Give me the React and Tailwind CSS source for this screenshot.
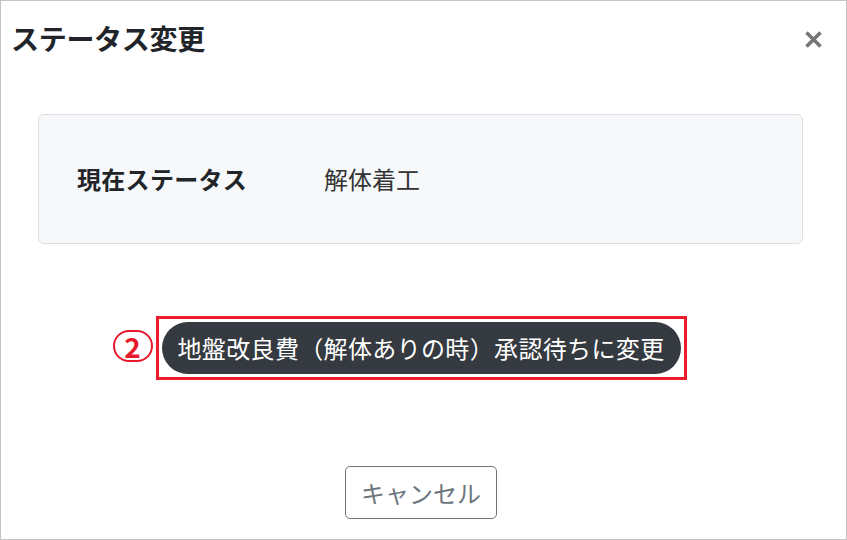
export default function App() {
    return (
        <div className="w-[847px] h-[540px] bg-white border border-[#c4c4c4] text-[#212529] overflow-hidden" style={{ fontFamily: '"Noto Sans CJK JP", "Noto Sans", sans-serif' }}>
            <div className="w-[840px]">
                {/* header */}
                <div className="flex items-start justify-between pl-[10px] pr-[18px] pt-[17px]">
                    <h1 className="text-[28px] font-bold leading-[40px] tracking-[-0.3px]">ステータス変更</h1>
                    <button className="mt-[12px]" aria-label="close">
                        <svg width="19" height="19" viewBox="0 0 19 19">
                            <path d="M2.5 2.5 L16.5 16.5 M16.5 2.5 L2.5 16.5" stroke="#767676" strokeWidth="3.6" strokeLinecap="butt" />
                        </svg>
                    </button>
                </div>

                {/* current status */}
                <div className="ml-[37px] mr-[38px] mt-[56px] h-[130px] bg-[#f7f8fa] border border-[#dcdfe3] rounded-[6px] flex items-center pl-[38px]">
                    <span className="w-[247px] text-[24px] font-bold leading-none tracking-[0.3px]">現在ステータス</span>
                    <span className="text-[24px] text-[#333] leading-none">解体着工</span>
                </div>

                {/* change button */}
                <div className="flex justify-center mt-[72px]">
                    <div className="relative border-[3px] border-[#ec1c2c] p-[3px]">
                        {/* annotation */}
                        <span className="absolute left-[-46px] top-[11px] w-[40px] h-[32px] rounded-full border-2 border-[#e8192c] text-[#e8192c] flex items-center justify-center text-[28px] font-bold leading-none">2</span>
                        <button className="h-[52px] px-[16px] rounded-full bg-[#343a40] text-white text-[24px] leading-none whitespace-nowrap tracking-[0.35px]">
                            地盤改良費（解体ありの時）承認待ちに変更
                        </button>
                    </div>
                </div>

                {/* cancel */}
                <div className="flex justify-center mt-[86px]">
                    <button className="h-[53px] w-[152px] border border-[#6c757d] rounded-[5px] text-[#6c757d] text-[24px] leading-none">
                        キャンセル
                    </button>
                </div>
            </div>
        </div>
    );
}
